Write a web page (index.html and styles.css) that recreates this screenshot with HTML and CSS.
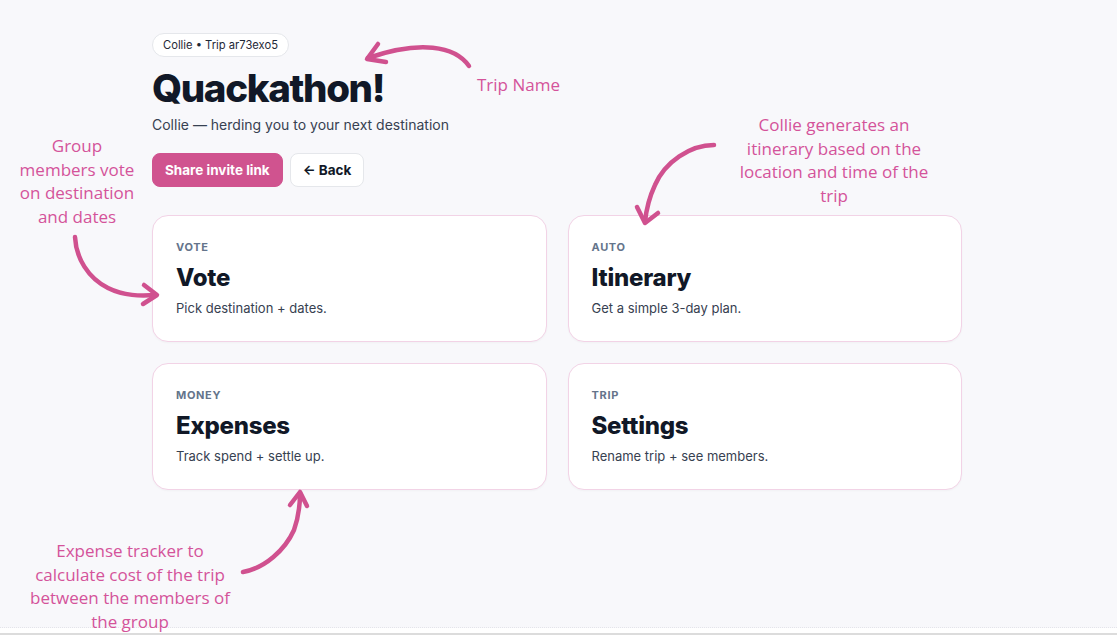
FILE: index.html
```html
<!DOCTYPE html>
<html lang="en">
<head>
<meta charset="utf-8">
<title>Quackathon! · Collie</title>
<link rel="stylesheet" href="styles.css">
</head>
<body>
<div class="app">
  <main class="page">
    <div class="pill">Collie • Trip ar73exo5</div>
    <h1 class="title">Quackathon!</h1>
    <p class="subtitle">Collie — herding you to your next destination</p>
    <div class="actions">
      <button class="btn btn-primary">Share invite link</button>
      <button class="btn btn-ghost">← Back</button>
    </div>
    <section class="grid">
      <a class="card" href="#"><span class="card-label">Vote</span><span class="card-title">Vote</span><span class="card-desc">Pick destination + dates.</span></a>
      <a class="card" href="#"><span class="card-label">Auto</span><span class="card-title">Itinerary</span><span class="card-desc">Get a simple 3-day plan.</span></a>
      <a class="card" href="#"><span class="card-label">Money</span><span class="card-title">Expenses</span><span class="card-desc">Track spend + settle up.</span></a>
      <a class="card" href="#"><span class="card-label">Trip</span><span class="card-title">Settings</span><span class="card-desc">Rename trip + see members.</span></a>
    </section>
  </main>

  <div class="note note-name">Trip Name</div>
  <div class="note note-vote">Group<br>members vote<br>on destination<br>and dates</div>
  <div class="note note-itin">Collie generates an<br>itinerary based on the<br>location and time of the<br>trip</div>
  <div class="note note-exp">Expense tracker to<br>calculate cost of the trip<br>between the members of<br>the group</div>

  <svg class="arrows" width="1117" height="635" viewBox="0 0 1117 635" fill="none" stroke="#d0518f" stroke-width="4.5" stroke-linecap="round" stroke-linejoin="round">
    <path d="M469 66 C455 46 420 40 368 58"/>
    <path d="M378 44 L367 59 L386 62"/>
    <path d="M714 145 C690 145 665 162 655 185 C648 200 646 212 645 222"/>
    <path d="M637 207 L645 223 L658 213"/>
    <path d="M75 237 C76 258 88 278 108 288 C124 296 140 296 156 295"/>
    <path d="M144 285 L157 295 L143 304"/>
    <path d="M243 572 C265 568 285 550 294 530 C299 516 300 505 300 493"/>
    <path d="M290 505 L300 492 L307 506"/>
  </svg>
</div>
<div class="bottom-strip"></div>
</body>
</html>
```

FILE: styles.css
```css
* { box-sizing: border-box; }

html, body {
  margin: 0;
  padding: 0;
}

body {
  background: #ffffff;
  font-family: Inter, "Liberation Sans", Arial, sans-serif;
  color: #111827;
  overflow: hidden;
}

.app {
  position: relative;
  height: 628px;
  background: #f8f8fb;
  border-bottom: 1px dotted #e4e4ea;
}

.bottom-strip {
  height: 7px;
  background: #ffffff;
  border-bottom: 2px solid #dcdcdc;
}

.page {
  width: 810px;
  margin-left: 152px;
  padding-top: 33px;
  display: flex;
  flex-direction: column;
  align-items: flex-start;
}

.pill {
  height: 24px;
  padding: 0 10px;
  display: flex;
  align-items: center;
  background: #ffffff;
  border: 1px solid #e5e7eb;
  border-radius: 999px;
  font-size: 11.2px;
  color: #1f2937;
}

.title {
  margin: 8px 0 0;
  font-size: 38.5px;
  line-height: 46px;
  font-weight: 800;
  letter-spacing: -0.035em;
  color: #111827;
}

.subtitle {
  margin: 4px 0 0;
  font-size: 14px;
  line-height: 20px;
  color: #374151;
}

.actions {
  margin-top: 18px;
  display: flex;
  gap: 7px;
}

.btn {
  height: 34px;
  padding: 0 12px;
  border-radius: 8px;
  font-family: inherit;
  font-size: 13.5px;
  font-weight: 700;
  cursor: pointer;
}

.btn-primary {
  background: #d0538f;
  border: 1px solid #d0538f;
  color: #ffffff;
}

.btn-ghost {
  background: #ffffff;
  border: 1px solid #e5e7eb;
  color: #111827;
}

.grid {
  margin-top: 28px;
  width: 810px;
  display: grid;
  grid-template-columns: 1fr 1fr;
  gap: 21px;
}

.card {
  height: 127px;
  padding: 24px 23px 0;
  display: flex;
  flex-direction: column;
  background: #ffffff;
  border: 1px solid #f2d3e6;
  border-radius: 16px;
  text-decoration: none;
  box-shadow: 0 1px 2px rgba(17, 24, 39, 0.03);
}

.card-label {
  font-size: 11px;
  line-height: 14px;
  font-weight: 700;
  letter-spacing: 0.06em;
  text-transform: uppercase;
  color: #64748b;
}

.card-title {
  margin-top: 9px;
  font-size: 24px;
  line-height: 30px;
  font-weight: 800;
  letter-spacing: -0.01em;
  color: #111827;
}

.card-desc {
  margin-top: 6px;
  font-size: 13px;
  line-height: 18px;
  color: #374151;
}

/* Annotation overlays */
.note {
  position: absolute;
  font-family: "Open Sans", "Liberation Sans", sans-serif;
  font-size: 17px;
  line-height: 23.6px;
  color: #d4539a;
  text-align: center;
  white-space: nowrap;
}

.note-name { left: 477px; top: 73px; text-align: left; }
.note-vote { left: 7px; top: 134px; width: 140px; }
.note-itin { left: 724px; top: 113px; width: 220px; }
.note-exp  { left: 17px; top: 539px; width: 226px; }

.arrows {
  position: absolute;
  left: 0;
  top: 0;
  pointer-events: none;
}
```
